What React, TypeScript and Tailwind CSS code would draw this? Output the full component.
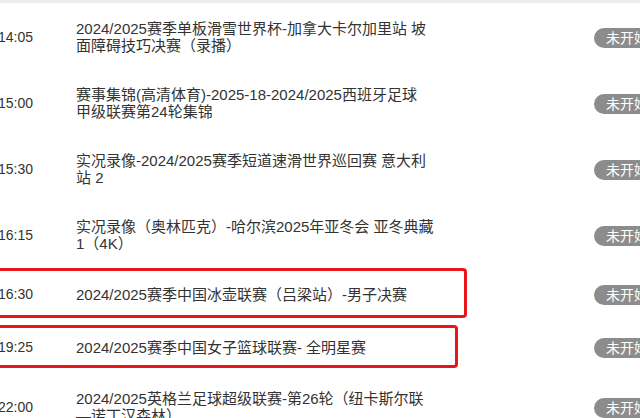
const rows = [
  { time: '14:05', lines: ['2024/2025赛季单板滑雪世界杯-加拿大卡尔加里站 坡', '面障碍技巧决赛（录播）'], h: 'h-[68px]' },
  { time: '15:00', lines: ['赛事集锦(高清体育)-2025-18-2024/2025西班牙足球', '甲级联赛第24轮集锦'], h: 'h-[64px]' },
  { time: '15:30', lines: ['实况录像-2024/2025赛季短道速滑世界巡回赛 意大利', '站 2'], h: 'h-[68px]' },
  { time: '16:15', lines: ['实况录像（奥林匹克）-哈尔滨2025年亚冬会 亚冬典藏', '1（4K）'], h: 'h-[64px]' },
  { time: '16:30', lines: ['2024/2025赛季中国冰壶联赛（吕梁站）-男子决赛'], h: 'h-[54px]' },
  { time: '19:25', lines: ['2024/2025赛季中国女子篮球联赛- 全明星赛'], h: 'h-[52px]' },
  { time: '22:00', lines: ['2024/2025英格兰足球超级联赛-第26轮（纽卡斯尔联', '—诺丁汉森林）'], h: 'h-[68px]' },
];

export default function App() {
  return (
    <main className="relative w-[640px] h-[418px] overflow-hidden bg-white text-[#333] font-['Liberation_Sans','Noto_Sans_CJK_SC',sans-serif]">
      <div className="h-[3px] bg-[#ebebeb]" />
      {rows.map((r) => (
        <div key={r.time} className={`flex items-center ${r.h}`}>
          <div className="w-[78px] ml-[-2px] text-[14px] shrink-0">{r.time}</div>
          <div className="flex-1 text-[15px] leading-[17px] whitespace-nowrap">
            {r.lines.map((l) => (
              <div key={l}>{l}</div>
            ))}
          </div>
          <div className="shrink-0 w-[46px] h-[20px] rounded-l-full bg-[#8c8c8c] text-white text-[14px] leading-[20px] pl-[12px] whitespace-nowrap overflow-hidden mt-[1px]">
            未开始
          </div>
        </div>
      ))}
      {/* red highlight boxes */}
      <div className="absolute left-[-12px] top-[268px] w-[479px] h-[50px] border-[3px] border-[#e8161b] rounded-[4px]" />
      <div className="absolute left-[-12px] top-[325px] w-[470px] h-[43px] border-[3px] border-[#e8161b] rounded-[4px]" />
    </main>
  );
}
